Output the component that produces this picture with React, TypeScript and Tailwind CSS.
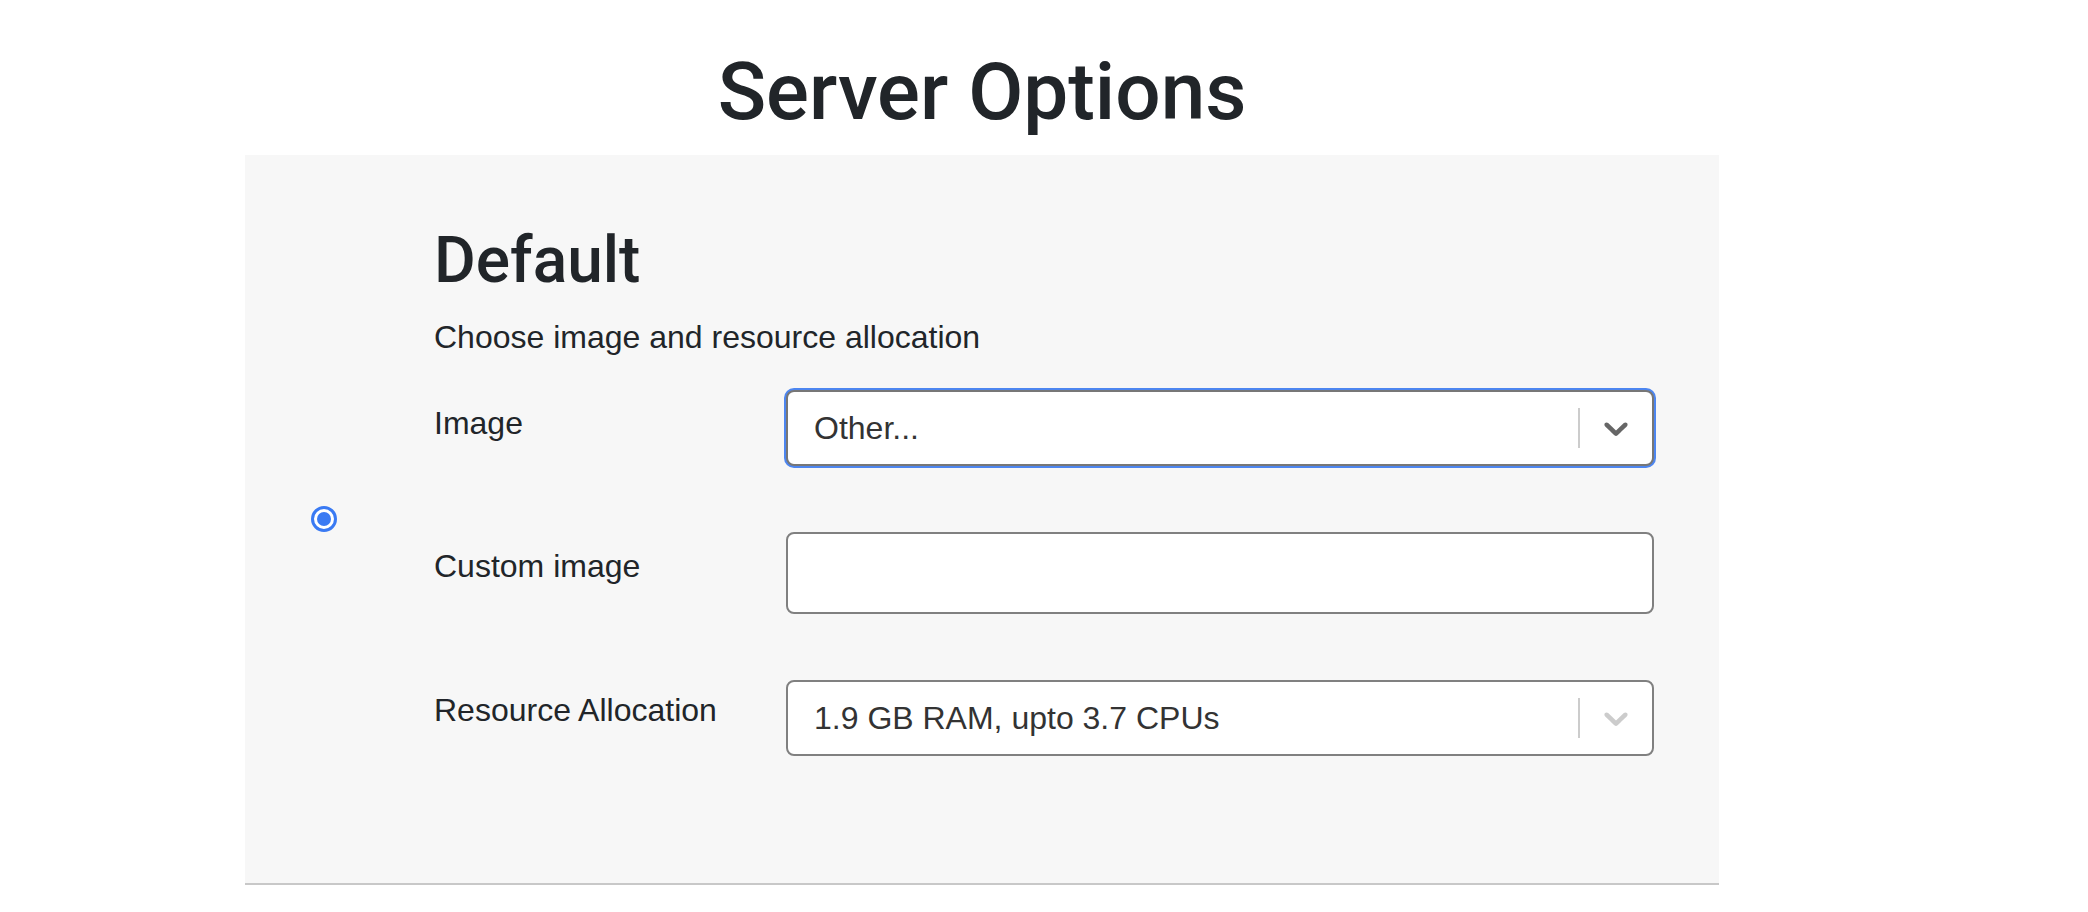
import React from "react";

const font = "font-['Liberation_Sans',Helvetica,Arial,sans-serif]";
const heading = "font-['Roboto','Liberation_Sans',Arial,sans-serif] font-medium";

const Chevron = ({ color }: { color: string }) => (
  <svg width="40" height="40" viewBox="0 0 20 20" aria-hidden="true">
    <path
      fill={color}
      d="M4.516 7.548c0.436-0.446 1.043-0.481 1.576 0l3.908 3.747 3.908-3.747c0.533-0.481 1.141-0.446 1.574 0 0.436 0.445 0.408 1.197 0 1.615-0.406 0.418-4.695 4.502-4.695 4.502-0.217 0.223-0.502 0.335-0.787 0.335s-0.57-0.112-0.789-0.335c0 0-4.287-4.084-4.695-4.502s-0.436-1.17 0-1.615z"
    />
  </svg>
);

const Select = ({
  value,
  focused,
}: {
  value: string;
  focused?: boolean;
}) => (
  <div
    className={
      focused
        ? "flex h-[76px] w-[868px] items-center rounded-[8px] border-2 border-[#777777] bg-white shadow-[0_0_0_2px_#4d86f0]"
        : "flex h-[76px] w-[868px] items-center rounded-[8px] border-2 border-[#808080] bg-white"
    }
  >
    <div className="flex-1 pl-[26px] text-[32px] leading-[48px] text-[#333333]">
      {value}
    </div>
    <div className="h-[40px] w-[2px] bg-[#cccccc]" />
    <div className="px-[16px] flex items-center">
      <Chevron color={focused ? "#666666" : "#cccccc"} />
    </div>
  </div>
);

const Row = ({
  label,
  pad,
  children,
}: {
  label: string;
  pad: string;
  children: React.ReactNode;
}) => (
  <div className="flex">
    <label className={`w-[352px] ${pad} text-[32px] leading-[48px] text-[#212529]`}>
      {label}
    </label>
    {children}
  </div>
);

export default function App() {
  return (
    <div className={`min-h-screen bg-white pt-[44px] ${font}`}>
      <div className="ml-[245px] w-[1474px]">
        <h1 className={`mb-[15px] text-center text-[80px] leading-[96px] text-[#212529] ${heading}`}>
          Server Options
        </h1>

        {/* Profile card */}
        <div className="flex items-center border-b-2 border-[#c8c8c8] bg-[#f7f7f7]">
          <div className="w-[189px] pl-[66px]">
            <span className="flex h-[26px] w-[26px] items-center justify-center rounded-full border-[3px] border-[#3a7af3] bg-white">
              <span className="h-[14px] w-[14px] rounded-full bg-[#3a7af3]" />
            </span>
          </div>

          <div className="flex flex-col pt-[67px] pb-[127px]">
            <h2 className={`text-[64px] leading-[77px] text-[#212529] ${heading}`}>
              Default
            </h2>
            <p className="mt-[14px] text-[32px] leading-[48px] text-[#212529]">
              Choose image and resource allocation
            </p>

            <div className="mt-[29px] flex flex-col gap-[66px]">
              <Row label="Image" pad="pt-[9px]">
                <Select value="Other..." focused />
              </Row>
              <Row label="Custom image" pad="pt-[10px]">
                <input
                  type="text"
                  className="h-[82px] w-[868px] rounded-[8px] border-2 border-[#808080] bg-white px-[24px] text-[32px] outline-none"
                />
              </Row>
              <Row label="Resource Allocation" pad="pt-[6px]">
                <Select value="1.9 GB RAM, upto 3.7 CPUs" />
              </Row>
            </div>
          </div>
        </div>
      </div>
    </div>
  );
}
